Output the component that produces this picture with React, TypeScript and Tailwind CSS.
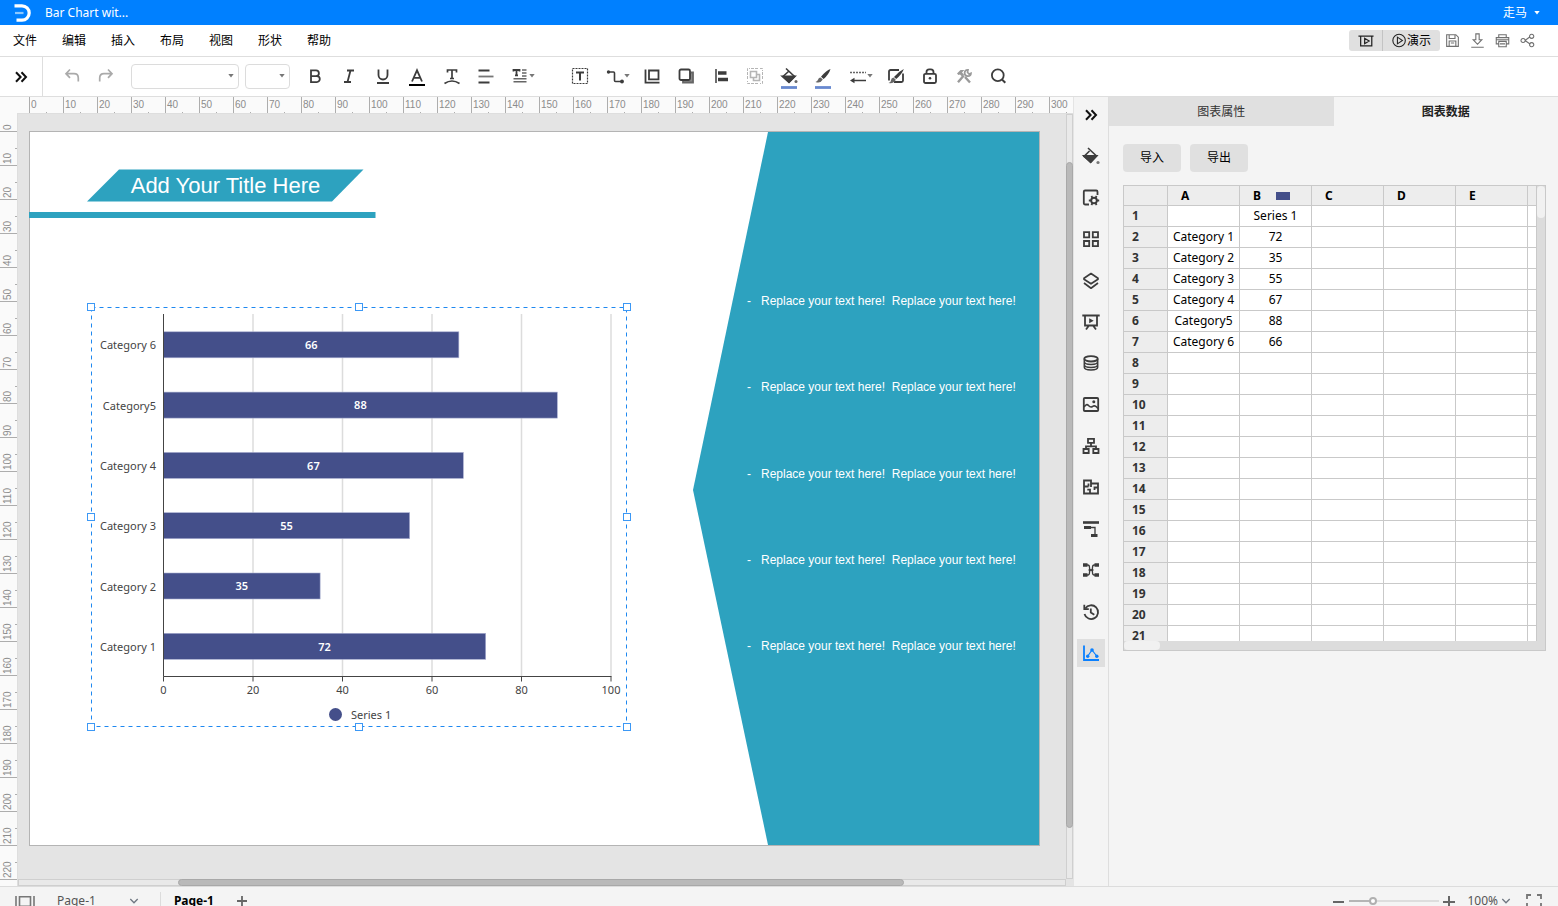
import React from "react";

const INK = "#3c3c3c";

function Icon({ children, color = INK, size = "size-[18px]", width = 1.8 }: { children: React.ReactNode; color?: string; size?: string; width?: number }) {
  return (
    <svg viewBox="0 0 18 18" className={`${size} shrink-0 overflow-visible`} fill="none" stroke={color} strokeWidth={width} aria-hidden="true">
      {children}
    </svg>
  );
}

function Caret({ color = "#777" }: { color?: string }) {
  return (
    <svg viewBox="0 0 6 4" className="h-1 w-1.5 shrink-0" fill={color} aria-hidden="true">
      <path d="M.3 0h5.400L3 3.600z" />
    </svg>
  );
}

function Chevron() {
  return (
    <svg viewBox="0 0 10 6" className="h-1.5 w-2.5 shrink-0" fill="none" stroke="#6f7782" strokeWidth="1.300" aria-hidden="true">
      <path d="M1.300 1l3.700 3.800L8.700 1" />
    </svg>
  );
}

const doubleChevron = (
  <Icon color="#111" width={2}>
    <path d="M4 4.200L8.600 9 4 13.800M9.500 4.200L14 9l-4.500 4.800" />
  </Icon>
);

type Tool = { label: string; icon: React.ReactNode; caret?: boolean; gapAfter?: boolean; color?: string };

const tools: Tool[] = [
  { label: "加粗", icon: <path d="M5 3.300h5a2.900 2.900 0 0 1 0 5.800H5zM5 9.100h5.800a3 3 0 0 1 0 6H5z" /> },
  { label: "斜体", icon: <path d="M7 3.500h7M4 15h7M10.500 3.500l-3 11.500" /> },
  { label: "下划线", icon: <path d="M4.500 2.500V8a4.500 4.500 0 0 0 9 0V2.500M3 16h12" /> },
  {
    label: "字体颜色",
    icon: (
      <>
        <path d="M4 14.500L9 3.300l5 11.200M5.800 10.800h6.400" />
        <path d="M1 18h16" stroke="#000" strokeWidth="2" />
      </>
    ),
  },
  { label: "艺术字", icon: <path d="M5.500 5.500V3h9v2.500M10 3v8.500M8 11.500h4M2.500 16.500q7.500-5 15 0" strokeWidth="1.700" /> },
  {
    label: "对齐",
    icon: (
      <>
        <path d="M2.500 3.500h11M2.500 15.500h11" />
        <path d="M2.500 9.500h15" stroke="#777" />
      </>
    ),
  },
  {
    label: "行距",
    caret: true,
    gapAfter: true,
    icon: (
      <>
        <path d="M2.500 4.500V3h6v1.500M5.500 3v5.500M4 8.300h3" />
        <path d="M11 3h4.500M11 6h4.500M11 9h4.500M2.500 11.800h13M2.500 14.800h13" strokeWidth="1.400" stroke="#666" />
      </>
    ),
  },
  {
    label: "文本框",
    icon: (
      <>
        <rect x="1.500" y="1.500" width="15" height="15" strokeWidth="1.200" strokeDasharray="2 1" />
        <path d="M5 5.500h8M9 5.500v8" strokeWidth="2" />
      </>
    ),
  },
  {
    label: "连接线",
    caret: true,
    icon: (
      <>
        <path d="M2 5h5.500q1 0 1 1v7.500q0 1 1 1h6" strokeWidth="1.600" />
        <circle cx="2.500" cy="5" r="1.700" fill={INK} stroke="none" />
        <circle cx="16" cy="14.500" r="1.900" fill={INK} stroke="none" />
      </>
    ),
  },
  { label: "位置", icon: <path d="M1.500 2.500v13.200H15.500M5 3.500h9.500v8.800H5z" /> },
  {
    label: "层次",
    icon: (
      <>
        <path d="M13 5.500h2v10H5v-2" fill="#888" stroke="#666" />
        <rect x="1.500" y="2.500" width="10.500" height="10.500" rx="1.500" fill="#fff" />
      </>
    ),
  },
  {
    label: "对齐对象",
    icon: (
      <>
        <path d="M4 2v14" strokeWidth="1.500" />
        <path d="M6 6h8.500M6 12.500h10" strokeWidth="3.600" />
      </>
    ),
  },
  {
    label: "组合",
    color: "#b5b5b5",
    icon: (
      <>
        <path d="M4.500 4.500h6v6h-6zM11 7.500h2.500v6h-6V11" strokeWidth="1.600" />
        <path d="M1.500 4V1.500H4M14 1.500h2.500V4M16.500 14v2.500H14M4 16.500H1.500V14M5 1.500h8M5 16.500h8M1.500 5v8M16.500 5v8" strokeWidth="1" strokeDasharray="3 1" />
      </>
    ),
  },
  {
    label: "填充",
    icon: (
      <>
        <path d="M6 1.500l8.500 8-5.500 5.500L3 9.500l5.500-5" strokeWidth="1.600" />
        <path d="M2.500 9.500h12.300L9 15.300z" fill={INK} />
        <circle cx="16" cy="14.500" r="1.500" fill="#666" stroke="none" />
        <path d="M1 20.500h16" stroke="#6889d0" strokeWidth="2.800" />
      </>
    ),
  },
  {
    label: "画笔",
    icon: (
      <>
        <path d="M16.500 2Q12 3.500 7 9.800l2.600 2.300Q15 7.200 16.500 2z" fill={INK} stroke="none" />
        <path d="M6.600 10.500q-2 .2-2.500 2T1.500 15q5 1.800 7.300-2.500z" fill="#666" stroke="none" />
        <path d="M1 20.500h16" stroke="#6889d0" strokeWidth="2.800" />
      </>
    ),
  },
  {
    label: "线条样式",
    caret: true,
    icon: (
      <>
        <path d="M1 5.500h16" strokeDasharray="2 1" strokeWidth="1.400" stroke="#666" />
        <path d="M3 13.500h14" strokeWidth="1.500" />
        <path d="M1 13.500l4.500-2.700v5.400z" fill={INK} stroke="none" />
      </>
    ),
  },
  {
    label: "编辑样式",
    icon: (
      <>
        <path d="M12 3H3.500a1.500 1.500 0 0 0-1.500 1.500v9M7 15h7.500a1.500 1.500 0 0 0 1.500-1.500V6.500" />
        <path d="M16.800 2Q11.500 4.500 7 10l2.200 1.900Q15 7.200 16.800 2z" fill={INK} stroke="none" />
        <path d="M6.500 10.500Q4 11.300 4 13.300T1.500 16q5.500.8 7.300-3.200z" fill="#666" stroke="none" />
      </>
    ),
  },
  {
    label: "锁定",
    icon: (
      <>
        <rect x="3" y="6.800" width="12" height="9.200" rx="1.500" />
        <path d="M5.500 6.500V5q0-2.700 2.700-2.700h1.600q2.700 0 2.700 2.700v1.500" />
        <circle cx="9" cy="11.300" r="1.300" fill={INK} stroke="none" />
      </>
    ),
  },
  {
    label: "工具",
    color: "#9a9a9a",
    icon: (
      <>
        <path d="M8.800 8.500l-5.800 6.700M10 10l5 5.500" strokeWidth="2.400" />
        <path d="M2 6.500L5.500 3h3.800L7 5.500l2 2L7 9.500 5 7.500 3.500 8z" fill="#9a9a9a" stroke="none" />
        <path d="M13 2.800a3.200 3.200 0 1 0 3 3.400l-2 .8-1.500-1.700z" strokeWidth="1.700" />
      </>
    ),
  },
  {
    label: "搜索",
    icon: (
      <>
        <circle cx="8.800" cy="8.300" r="5.900" />
        <path d="M13 12.500l3.300 3.200" strokeWidth="2" />
      </>
    ),
  },
];

const sideIcons: { label: string; icon: React.ReactNode; active?: boolean }[] = [
  {
    label: "填充",
    icon: (
      <>
        <path d="M6 1l8.500 8-5.500 6L2 9.500l5.500-5.500" strokeWidth="1.600" />
        <path d="M2 9h12.500L8.500 15.300z" fill={INK} />
        <circle cx="16" cy="15.500" r="1.600" fill="#777" stroke="none" />
      </>
    ),
  },
  {
    label: "页面设置",
    icon: (
      <>
        <path d="M7 15.500H3a1.200 1.200 0 0 1-1.200-1.200V2.700A1.200 1.200 0 0 1 3 1.500h11.300a1.200 1.200 0 0 1 1.200 1.200V6" />
        <circle cx="12" cy="11.500" r="2.800" strokeWidth="1.900" />
        <path d="M9.400 7l1.100 2M13.500 14l1.100 2M14.600 7l-1.100 2M10.500 14l-1.100 2M6.800 11.500h2.400M14.800 11.500h2.400" strokeWidth="1.800" />
      </>
    ),
  },
  { label: "形状库", icon: <path d="M2 2.200h5.200v5.200H2zM10.800 2.200H16v5.200h-5.200zM2 11h5.200v5.200H2zM10.800 11H16v5.200h-5.200z" /> },
  { label: "图层", icon: <path d="M9 1.500l7 4.700v1L9 11.800 2 7.200v-1zM2 11l7 5.200L16 11" strokeWidth="1.700" strokeLinejoin="round" /> },
  {
    label: "幻灯片",
    icon: (
      <>
        <path d="M.3 2.500h17.400M3 3v9.500h12V3M7 12.500l-3 4M11 12.500l3 4" />
        <path d="M7.200 5.200v5l4.500-2.500z" fill={INK} stroke="none" />
      </>
    ),
  },
  {
    label: "数据",
    icon: (
      <>
        <ellipse cx="9" cy="4.800" rx="6.700" ry="2.700" />
        <path d="M2.300 4.800v8.400c0 3.600 13.400 3.600 13.400 0V4.800M2.300 7.800c0 3.600 13.400 3.600 13.400 0M2.300 10.800c0 3.600 13.400 3.600 13.400 0" strokeWidth="1.500" />
      </>
    ),
  },
  {
    label: "图片",
    icon: (
      <>
        <rect x="1.800" y="2" width="14.400" height="13" rx="1" />
        <path d="M2 11q2.500-3.800 4.500-1.500t4 1q2.500-2 5.500 2" strokeWidth="1.600" />
        <circle cx="11.800" cy="5.800" r="1.500" fill={INK} stroke="none" />
      </>
    ),
  },
  { label: "组织结构", icon: <path d="M6 1.800h6v4H6zM1.500 12h5.200v4H1.500zM11.300 12h5.200v4h-5.200zM9 6v3.500M4 11.500V9.300h10v2.200" /> },
  { label: "平面图", icon: <path d="M2 2.500h7v3h7v10H2zM2 8.500h4.500M9 5.500v3.500M6.500 8.500V5.500M8 15.500v-3.800H5.300M12.500 9.500H16M12.500 8.500v3.500" /> },
  {
    label: "时间线",
    icon: (
      <>
        <path d="M1 2.500h16" strokeWidth="2.600" />
        <path d="M2 7.500h7M9 15.500h6.500" strokeWidth="3" />
        <path d="M9 7.500h4v8" strokeWidth="1.300" />
      </>
    ),
  },
  {
    label: "思维导图",
    icon: (
      <>
        <path d="M1 4h4.500M1 14h4.500M12.500 4H17M12.500 14H17" strokeWidth="3.600" />
        <path d="M5 4h.8q1.700 0 1.700 2.500T9 9t1.500-2.500T12.200 4h.8M5 14h.8q1.700 0 1.700-2.500T9 9t1.500 2.500 1.700 2.500h.8M6.500 9h5" strokeWidth="1.300" />
      </>
    ),
  },
  {
    label: "历史记录",
    icon: (
      <>
        <path d="M3.300 5.500a6.900 6.900 0 1 1-.8 5.500" />
        <path d="M2.300 1.700v4.500h4.500M8.800 5.500v4l3.500 2.200" />
      </>
    ),
  },
  {
    label: "图表",
    active: true,
    icon: (
      <>
        <path d="M2 1.500v14.500h15" />
        <path d="M5.500 12.500L10 6l5 6.500" strokeWidth="1.200" />
        <circle cx="5.700" cy="12.200" r="1.700" fill="#0a80ff" stroke="none" />
        <circle cx="10" cy="6" r="1.800" fill="#0a80ff" stroke="none" />
        <circle cx="14.800" cy="12.200" r="1.700" fill="#0a80ff" stroke="none" />
      </>
    ),
  },
];

const STEP = 34;
const columnsOfRuler = Array.from({ length: 31 }, (_, i) => i);
const rowsOfRuler = Array.from({ length: 23 }, (_, i) => i);

function HorizontalRuler() {
  return (
    <svg className="block h-[17px] w-full" aria-hidden="true">
      {columnsOfRuler.map((i) => (
        <g key={i}>
          <path d={`M${12.5 + i * STEP} 0v17M${29.5 + i * STEP} 15v2`} stroke="#adadad" />
          <text x={14 + i * STEP} y="11" className="text-[10px]" fill="#8c8c8c" fontFamily="Liberation Sans, sans-serif">
            {i * 10}
          </text>
        </g>
      ))}
      <path d="M0 16.500h4000" stroke="#dedede" />
    </svg>
  );
}

function VerticalRuler() {
  return (
    <svg className="block h-full w-[17px]" aria-hidden="true">
      {rowsOfRuler.map((i) => (
        <g key={i}>
          <path d={`M0 ${17.5 + i * STEP}h17M15 ${34.5 + i * STEP}h2`} stroke="#adadad" />
          <text transform={`translate(11 ${16 + i * STEP}) rotate(-90)`} className="text-[10px]" fill="#8c8c8c" fontFamily="Liberation Sans, sans-serif">
            {i * 10}
          </text>
        </g>
      ))}
    </svg>
  );
}

const series = [
  { name: "Category 1", value: 72 },
  { name: "Category 2", value: 35 },
  { name: "Category 3", value: 55 },
  { name: "Category 4", value: 67 },
  { name: "Category5", value: 88 },
  { name: "Category 6", value: 66 },
];

function BarChart() {
  const left = 72.5;
  const unit = 4.475;
  const axis = 369.5;
  return (
    <svg viewBox="0 0 536 420" className="block h-[420px] w-[536px] overflow-visible" fontFamily="Noto Sans, sans-serif" fontSize="11" role="img" aria-label="Bar chart">
      {[20, 40, 60, 80, 100].map((t) => (
        <path key={t} d={`M${left + t * unit} 7V${axis}`} stroke="#dcdcdc" strokeWidth="1.500" />
      ))}
      {[0, 20, 40, 60, 80, 100].map((t) => (
        <g key={t}>
          <path d={`M${left + t * unit} ${axis}v5`} stroke="#444" />
          <text x={left + t * unit} y="387" textAnchor="middle" fill="#444">
            {t}
          </text>
        </g>
      ))}
      {series.map((s, i) => {
        const mid = 339.3 - i * 60.3;
        return (
          <g key={s.name}>
            <rect x={left} y={mid - 13} width={s.value * unit} height="26" fill="#444f8a" stroke="#a9aed0" strokeWidth=".6" />
            <text x="65" y={mid + 4.5} textAnchor="end" fill="#444">
              {s.name}
            </text>
            <text x={left + (s.value * unit) / 2} y={mid + 4.2} textAnchor="middle" fill="#fff" fontWeight="600">
              {s.value}
            </text>
          </g>
        );
      })}
      <path d={`M${left} 7V${axis}H${left + 448}`} fill="none" stroke="#444" />
      <circle cx="244.500" cy="407.500" r="6.500" fill="#444f8a" />
      <text x="260" y="412" fill="#444">
        Series 1
      </text>
      <rect x=".5" y=".5" width="535" height="419" fill="none" stroke="#1e88f0" strokeDasharray="4 4" />
      {[0.5, 268.5, 536.5].flatMap((x) =>
        [0.5, 210.5, 420.5].map((y) =>
          x === 268.5 && y === 210.5 ? null : <rect key={`${x}-${y}`} x={x - 4} y={y - 4} width="7" height="7" fill="#fff" stroke="#3c98f5" />
        )
      )}
    </svg>
  );
}

const bullets = ["top-[161px]", "top-[247px]", "top-[334px]", "top-[420px]", "top-[506px]"];

function Page() {
  return (
    <div className="relative mt-[17px] ml-3 h-[715px] w-[1011px] bg-white outline outline-[#b4b4b4] -outline-offset-1">
      <svg viewBox="0 0 1011 715" className="absolute inset-0 h-[715px] w-[1011px]" fill="#2da2bf" aria-hidden="true">
        <path d="M739 1h271v713H739L664 359z" />
        <path d="M90 38.500h244.500L303 70.500H58z" />
        <path d="M0 81h346.500v6H0z" />
      </svg>
      <h1 className="absolute top-[39px] left-[58px] w-[277px] text-center font-['Liberation_Sans',sans-serif] text-[22px] leading-8 text-white">Add Your Title Here</h1>
      <ul className="font-['Liberation_Sans',sans-serif] text-xs leading-[18px] text-white">
        {bullets.map((top) => (
          <li key={top} className={`absolute left-[718px] flex gap-[10px] whitespace-pre ${top}`}>
            <span>-</span>
            <span>{"Replace your text here!  Replace your text here!"}</span>
          </li>
        ))}
      </ul>
      <div className="absolute top-[176px] left-[62px]">
        <BarChart />
      </div>
    </div>
  );
}

const rows = Array.from({ length: 21 }, (_, i) => {
  if (i === 0) return ["", "Series 1"];
  const s = series[i - 1];
  return s ? [s.name, String(s.value)] : ["", ""];
});

function DataSheet() {
  return (
    <div className="mt-[13px] mr-3 ml-3.5 grid grid-cols-[1fr_9px] grid-rows-[455px_9px] border border-[#c9c9c9]">
      <div className="overflow-hidden bg-white">
        <table className="w-[476px] table-fixed border-separate border-spacing-0 bg-white text-xs">
          <colgroup>
            <col className="w-11" />
            {[0, 1, 2, 3, 4, 5].map((c) => (
              <col key={c} className="w-[72px]" />
            ))}
          </colgroup>
          <thead>
            <tr className="h-5 bg-[#ededed] text-left text-black">
              <th className="border-r border-b border-[#c9c9c9]" aria-label="行" />
              {["A", "B", "C", "D", "E", ""].map((c, i) => (
                <th key={i} className="h-5 border-r border-b border-[#c9c9c9] py-0 pl-[13px] leading-[18px]">
                  <span className="flex items-center gap-[15px]">
                    {c}
                    {c === "B" && <i className="h-2 w-3.5 bg-[#444f8a]" />}
                  </span>
                </th>
              ))}
            </tr>
          </thead>
          <tbody>
            {rows.map((r, i) => (
              <tr key={i}>
                <th className="h-[21px] border-r border-b border-[#c9c9c9] bg-[#ededed] py-0 pl-2 text-left leading-5 text-[#333]">{i + 1}</th>
                {[0, 1, 2, 3, 4, 5].map((c) => (
                  <td key={c} className="border-r border-b border-[#c9c9c9] p-0 text-center leading-5 whitespace-nowrap text-black">
                    {r[c]}
                  </td>
                ))}
              </tr>
            ))}
          </tbody>
        </table>
      </div>
      <div className="border-l border-[#c9c9c9] bg-[#dcdcdc]">
        <div className="h-8 rounded bg-[#f1f1f1]" />
      </div>
      <div className="bg-[#dcdcdc]">
        <div className="h-[9px] w-9 rounded bg-[#f1f1f1]" />
      </div>
      <div className="bg-[#dcdcdc]" />
    </div>
  );
}

export default function App() {
  return (
    <div className="flex h-screen flex-col overflow-hidden bg-[#f4f4f4] font-['Noto_Sans','Noto_Sans_CJK_SC',sans-serif] text-xs text-black">
      <header className="flex h-[25px] shrink-0 items-center bg-[#0080ff] text-white">
        <svg viewBox="0 0 18 18" className="ml-3.5 size-[18px]" fill="none" aria-hidden="true">
          <path d="M.5 1.800h7.500a7.200 7.200 0 0 1 0 14.400h-5.500" stroke="#fff" strokeWidth="3.200" />
          <path d="M1 9h8.500" stroke="#8cc8ff" strokeWidth="2.200" />
        </svg>
        <span className="ml-[13px] flex-1">Bar Chart wit...</span>
        <button className="mr-[18px] flex items-center gap-[7px]">
          走马 <Caret color="#fff" />
        </button>
      </header>

      <div className="flex h-8 shrink-0 items-center justify-between border-b border-[#dedede] bg-white">
        <nav className="flex gap-[25px] pl-[13px]">
          {["文件", "编辑", "插入", "布局", "视图", "形状", "帮助"].map((m) => (
            <button key={m}>{m}</button>
          ))}
        </nav>
        <div className="flex items-center pr-[18px]">
          <div className="flex h-[21px] overflow-hidden rounded-[3px] bg-[#e0e0e0]">
            <button aria-label="幻灯片放映" className="flex w-[34px] items-center justify-center border-r border-[#c4c4c4]">
              <Icon color="#222" size="size-4" width={1.4}>
                <path d="M.5 3.500h17M3 3.500v11h12.500v-11M7.500 6v6l5-3z" />
              </Icon>
            </button>
            <button className="flex w-[57px] items-center justify-center">
              <Icon color="#222" size="size-[15px]" width={1.3}>
                <circle cx="8.500" cy="9" r="7.500" />
                <path d="M6.500 5v8l6-4z" />
              </Icon>
              演示
            </button>
          </div>
          {[
            { label: "保存", d: "M2 2h11l3 3v11H2zM5 2v4.500h7V2M5 16V9.500h8V16M7 12h4" },
            { label: "下载", d: "M7 1h4v7h3.200L9 13.500 3.800 8H7zM1.500 17h15" },
            { label: "打印", d: "M4.500 5.500V2h9v3.500M4.500 13H1.500V5.500h15V13h-3M4.500 10h9v6.500h-9zM6 13h6M2 8h14" },
            { label: "分享", d: "M6 9l6-4.500M6 9l6.500 4.500M3.700 6.500a2.500 2.500 0 1 0 .01 0zM14 1.500a2.500 2.500 0 1 0 .01 0zM14 11.500a2.500 2.500 0 1 0 .01 0z" },
          ].map((b) => (
            <button key={b.label} aria-label={b.label} className="flex w-[25px] justify-center">
              <Icon color="#707070" size="size-[15px]" width={1.3}>
                <path d={b.d} />
              </Icon>
            </button>
          ))}
        </div>
      </div>

      <div className="flex h-10 shrink-0 items-center border-b border-[#dedede] bg-white pb-px">
        <button aria-label="展开" className="-mb-px flex h-[39px] w-[43px] items-center justify-center border-r border-[#dedede]">
          {doubleChevron}
        </button>
        <button aria-label="撤销" className="ml-3 flex w-[34px] justify-center">
          <Icon color="#aaa" width={1.7}>
            <path d="M7 2.500L3 6.700l4 4.200M3 6.700h8q4.300 0 4.300 4.300v3.500" />
          </Icon>
        </button>
        <button aria-label="重做" className="flex w-[34px] justify-center">
          <Icon color="#aaa" width={1.7}>
            <path d="M11 2.500l4 4.200-4 4.200M15 6.700H7q-4.300 0-4.300 4.300v3.500" />
          </Icon>
        </button>
        <label className="relative ml-2 flex items-center">
          <select aria-label="字体" className="h-[25px] w-[108px] appearance-none rounded-sm border border-[#dcdcdc] bg-white" />
          <span className="pointer-events-none absolute right-[5px]">
            <Caret />
          </span>
        </label>
        <label className="relative mr-2 ml-1.5 flex items-center">
          <select aria-label="字号" className="h-[25px] w-[45px] appearance-none rounded-sm border border-[#dcdcdc] bg-white" />
          <span className="pointer-events-none absolute right-[5px]">
            <Caret />
          </span>
        </label>
        {tools.map((t) => (
          <button
            key={t.label}
            aria-label={t.label}
            className={`flex shrink-0 items-center ${t.caret ? "w-[39px] pl-[9px]" : "w-[34px] justify-center"} ${t.gapAfter ? "mr-[22px]" : ""}`}
          >
            <Icon color={t.color}>{t.icon}</Icon>
            {t.caret && <Caret />}
          </button>
        ))}
      </div>

      <main className="flex min-h-0 flex-1">
        <section className="grid min-w-0 flex-1 grid-cols-[17px_1fr] grid-rows-[17px_1fr] bg-[#fafafa]">
          <div />
          <div className="overflow-hidden">
            <HorizontalRuler />
          </div>
          <div className="overflow-hidden">
            <VerticalRuler />
          </div>
          <div className="grid min-h-0 min-w-0 grid-cols-[1fr_7px] grid-rows-[1fr_7px] border-l border-[#dedede] bg-[#e4e4e4]">
            <div className="-ml-px min-h-0 min-w-0 overflow-hidden">
              <Page />
            </div>
            <div className="flex flex-col border border-[#cfcfcf] bg-[#e9e9e9]">
              <div className="flex-[47]" />
              <div className="-mx-px flex-[668] rounded-sm border border-[#a8a8a8] bg-[#b9b9b9]" />
              <div className="flex-[50]" />
            </div>
            <div className="flex border border-[#cfcfcf] bg-[#e9e9e9]">
              <div className="flex-[160]" />
              <div className="-my-px flex-[726] rounded-sm border border-[#a8a8a8] bg-[#b9b9b9]" />
              <div className="flex-[162]" />
            </div>
            <div />
          </div>
        </section>

        <aside className="flex w-[35px] shrink-0 flex-col items-center border-l border-[#e4e4e4] pt-1">
          <div className="flex h-[566px] flex-col justify-between">
            <button aria-label="收起" className="flex size-7 items-center justify-center">
              {doubleChevron}
            </button>
            {sideIcons.map((s) => (
              <button key={s.label} aria-label={s.label} className={`flex size-7 items-center justify-center ${s.active ? "bg-[#dfdfdf]" : ""}`}>
                <Icon color={s.active ? "#0a80ff" : INK}>{s.icon}</Icon>
              </button>
            ))}
          </div>
        </aside>

        <section className="w-[450px] shrink-0 border-l border-[#dedede]">
          <div className="grid h-[29px] grid-cols-2">
            <button className="bg-[#e0e0e0] text-[#333]">图表属性</button>
            <button className="font-bold text-[#222]">图表数据</button>
          </div>
          <div className="mt-[18px] flex gap-[9px] px-3.5">
            <button className="h-7 w-[58px] rounded-sm bg-[#e0e0e0]">导入</button>
            <button className="h-7 w-[58px] rounded-sm bg-[#e0e0e0]">导出</button>
          </div>
          <DataSheet />
        </section>
      </main>

      <footer className="h-5 shrink-0 overflow-hidden border-t border-[#dcdcdc]">
        <div className="flex h-7 items-center text-[#555]">
          <svg viewBox="0 0 20 14" className="ml-[15px] h-3.5 w-5" fill="none" stroke="#777" strokeWidth="1.600" aria-hidden="true">
            <path d="M1 2v12M19 2v12M4.500 2.800h11v9.400h-11z" />
          </svg>
          <button className="ml-[22px] flex items-center gap-[33px]">
            Page-1 <Chevron />
          </button>
          <span className="mr-[13px] ml-[21px] h-[18px] w-px bg-[#dcdcdc]" />
          <button className="font-bold text-black">Page-1</button>
          <button aria-label="添加页面" className="ml-[22px]">
            <svg viewBox="0 0 12 12" className="size-3" stroke="#666" strokeWidth="1.800" aria-hidden="true">
              <path d="M6 1v10M1 6h10" />
            </svg>
          </button>
          <div className="ml-auto flex items-center pr-4">
            <button aria-label="缩小">
              <svg viewBox="0 0 12 12" className="size-3" stroke="#666" strokeWidth="2" aria-hidden="true">
                <path d="M0 7h11" />
              </svg>
            </button>
            <input
              type="range"
              aria-label="缩放"
              defaultValue={24}
              className="mx-1 h-3 w-[90px] appearance-none bg-transparent [&::-webkit-slider-runnable-track]:h-0.5 [&::-webkit-slider-runnable-track]:bg-[linear-gradient(to_right,#b5b5b5_25%,#dddddd_25%)] [&::-webkit-slider-thumb]:-mt-[3px] [&::-webkit-slider-thumb]:size-2 [&::-webkit-slider-thumb]:appearance-none [&::-webkit-slider-thumb]:rounded-full [&::-webkit-slider-thumb]:border-2 [&::-webkit-slider-thumb]:border-[#b0b0b0] [&::-webkit-slider-thumb]:bg-white"
            />
            <button aria-label="放大">
              <svg viewBox="0 0 12 12" className="size-3" stroke="#666" strokeWidth="2" aria-hidden="true">
                <path d="M6 1v11M0 7h12" />
              </svg>
            </button>
            <button className="ml-3 flex items-center gap-[3px]">
              100% <Chevron />
            </button>
            <button aria-label="全屏" className="ml-[15px]">
              <svg viewBox="0 0 16 14" className="h-3.5 w-4" fill="none" stroke="#777" strokeWidth="1.800" aria-hidden="true">
                <path d="M1 5V1h4M11 1h4v4M15 9v4h-4M5 13H1V9" />
              </svg>
            </button>
          </div>
        </div>
      </footer>
    </div>
  );
}
